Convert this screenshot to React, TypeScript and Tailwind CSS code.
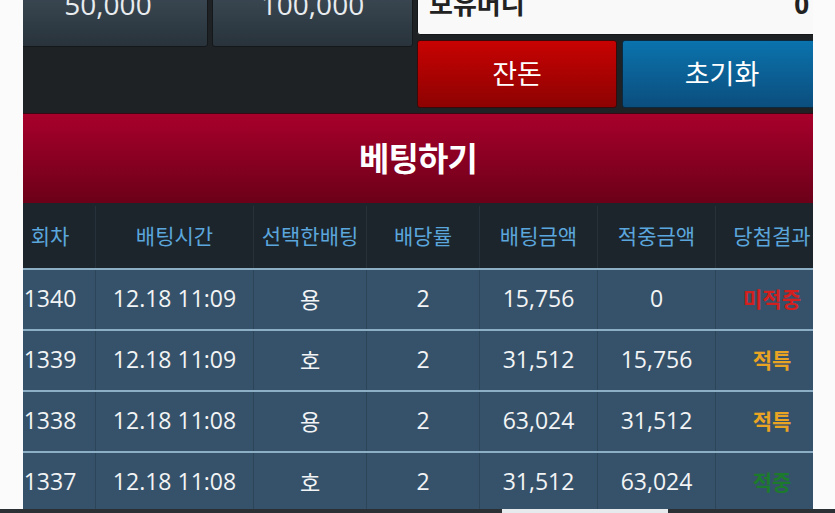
const FONT = { fontFamily: "'Open Sans', 'Noto Sans CJK KR', sans-serif" };

interface BetRow {
  round: string;
  time: string;
  pick: string;
  odds: string;
  amount: string;
  win: string;
  result: '미적중' | '적특' | '적중';
}

const ROWS: BetRow[] = [
  { round: '1340', time: '12.18 11:09', pick: '용', odds: '2', amount: '15,756', win: '0', result: '미적중' },
  { round: '1339', time: '12.18 11:09', pick: '호', odds: '2', amount: '31,512', win: '15,756', result: '적특' },
  { round: '1338', time: '12.18 11:08', pick: '용', odds: '2', amount: '63,024', win: '31,512', result: '적특' },
  { round: '1337', time: '12.18 11:08', pick: '호', odds: '2', amount: '31,512', win: '63,024', result: '적중' },
];

const RESULT_STYLE: Record<string, string> = {
  미적중: 'text-[#d3201f]',
  적특: 'text-[#eaa424]',
  적중: 'text-[#1c7a2c]',
};

const HEADERS = ['회차', '배팅시간', '선택한배팅', '배당률', '배팅금액', '적중금액', '당첨결과'];

const COLS = 'grid grid-cols-[87px_158px_113px_113px_118px_118px_113px]';

export default function App() {
  return (
    <div className="relative w-[835px] h-[513px] bg-[#fbfbfb] overflow-hidden" style={FONT}>
      <div className="ml-[23px] w-[790px] h-[513px] overflow-hidden">
        <div className="ml-[-15px] w-[820px]">
          {/* chip buttons / balance */}
          <div className="h-[113px] overflow-hidden bg-[#1e2225] flex gap-[4px] pr-[6px]">
            <div className="w-[405px] flex gap-[4px] items-start">
              {['50,000', '100,000'].map((v, i) => (
                <div
                  key={v}
                  className={`${i === 0 ? 'w-[200px]' : 'w-[201px]'} h-[60px] mt-[-13px] rounded-[3px] border border-[#14181b] bg-gradient-to-b from-[#3d4b56] to-[#28333b] text-center`}
                >
                  <span className="block pt-[3px] text-[28px] leading-[27px] text-[#e8ecef]">{v}</span>
                </div>
              ))}
            </div>
            <div className="w-[405px] flex flex-col gap-[5px]">
              <div className="h-[48px] mt-[-13px] rounded-[3px] border border-[#14181b] bg-[#f9f9f9] flex items-start justify-between pl-[11px] pr-[12px]">
                <span className="pt-[2px] text-[26px] leading-[28px] font-bold text-[#222]">보유머니</span>
                <span className="pt-[2px] text-[26px] leading-[28px] font-bold text-[#222]">0</span>
              </div>
              <div className="flex gap-[5px] h-[68px]">
                <div className="w-[200px] rounded-[3px] border border-[#3a0a0a] bg-gradient-to-b from-[#c80202] to-[#8e0202] flex items-center justify-center text-[27px] text-white">
                  잔돈
                </div>
                <div className="flex-1 rounded-[3px] border border-[#0b2a40] bg-gradient-to-b from-[#0a73ad] to-[#0b4e7e] flex items-center justify-center text-[27px] text-white">
                  초기화
                </div>
              </div>
            </div>
          </div>

          {/* bet button */}
          <div className="h-[90px] border-t border-[#3a0712] bg-gradient-to-b from-[#a8002b] to-[#6c0019] flex items-center justify-center">
            <span className="text-[33px] font-bold text-white tracking-tight">베팅하기</span>
          </div>

          {/* history table */}
          <div className={`${COLS} h-[65px] bg-[#1c252c] pt-[3px]`}>
            {HEADERS.map((h, i) => (
              <div
                key={h}
                className={`flex items-center justify-center text-[21px] text-[#5ba6dc] ${i > 0 ? 'border-l border-[#27313a]' : 'pr-[3px]'}`}
              >
                {h}
              </div>
            ))}
          </div>
          {ROWS.map((r) => (
            <div key={r.round} className={`${COLS} h-[61px] border-t-2 border-[#8cafc6] bg-[#36526a] text-[23px] text-[#f2f4f5]`}>
              <div className="flex items-center justify-center pb-[2px] pr-[3px]">{r.round}</div>
              <div className="flex items-center justify-center pb-[2px] border-l border-[#2c4558]">{r.time}</div>
              <div className="flex items-center justify-center border-l border-[#2c4558] text-[22px]">{r.pick}</div>
              <div className="flex items-center justify-center pb-[2px] border-l border-[#2c4558]">{r.odds}</div>
              <div className="flex items-center justify-center pb-[2px] border-l border-[#2c4558]">{r.amount}</div>
              <div className="flex items-center justify-center pb-[2px] border-l border-[#2c4558]">{r.win}</div>
              <div className={`flex items-center justify-center border-l border-[#2c4558] text-[21px] font-bold ${RESULT_STYLE[r.result]}`}>
                {r.result}
              </div>
            </div>
          ))}
        </div>
      </div>

      {/* scroll bar strip */}
      <div className="absolute left-0 right-0 bottom-0 h-[4px] bg-[#2b3035]">
        <div className="absolute left-[502px] w-[166px] top-0 h-[4px] bg-[#e6eaed]" />
      </div>
    </div>
  );
}
